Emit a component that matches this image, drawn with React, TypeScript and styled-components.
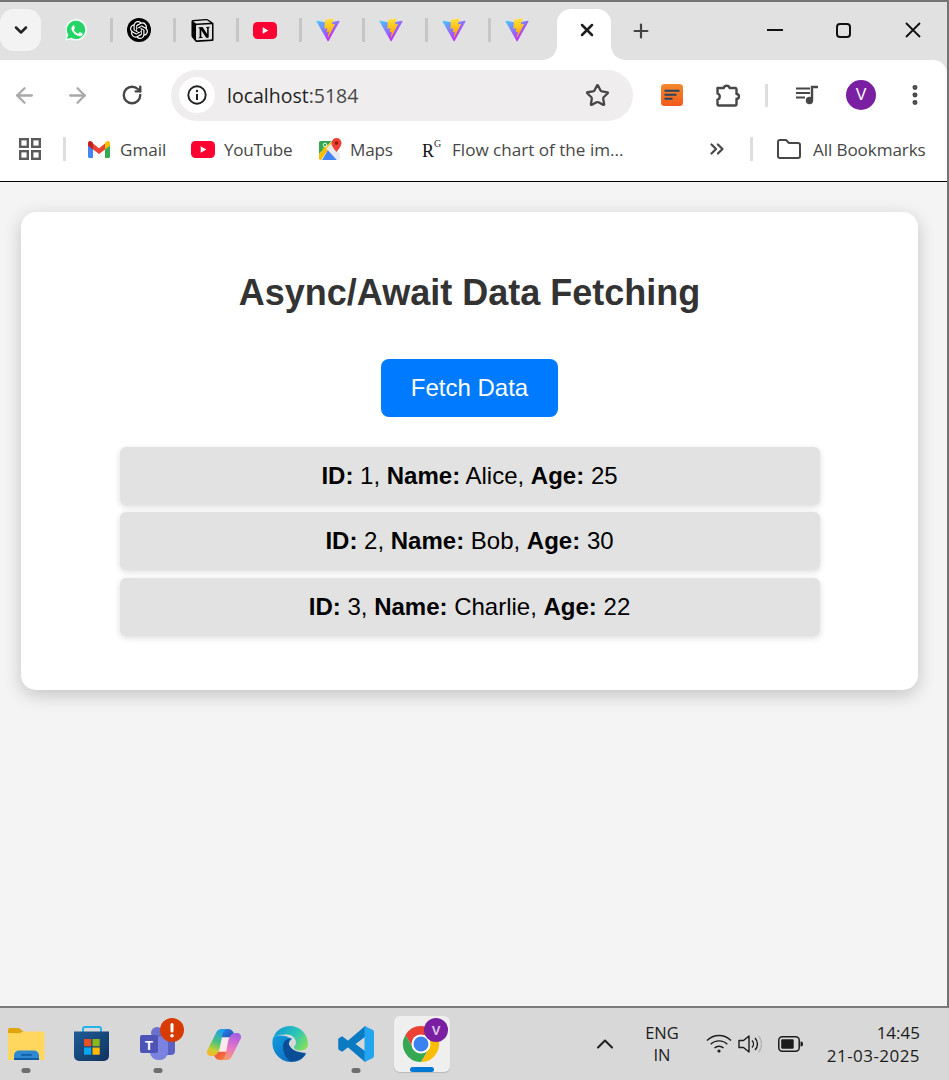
import React from "react";
import styled, { createGlobalStyle } from "styled-components";
import { ArrowLeft, ArrowRight, RotateCw, Star, X, Plus, ChevronDown, ChevronUp, ChevronsRight, EllipsisVertical } from "lucide-react";
import { SiOpenai, SiNotion } from "react-icons/si";

const Global = createGlobalStyle`
  * { box-sizing: border-box; }
  html, body { margin: 0; padding: 0; background: #d8d8d8; }
  body { font-family: "Liberation Sans", Arial, sans-serif; overflow: hidden; }
  svg { flex: none; }
`;

const UI_FONT = `"Open Sans", "Noto Sans", sans-serif`;

const Screen = styled.div`
  width: 949px; height: 1080px; display: flex; flex-direction: column; overflow: hidden;
`;
const BrowserWindow = styled.div`
  height: 1008px; flex: none; display: flex; flex-direction: column;
  border-top: 2px solid #747474; border-right: 2px solid #747474; border-bottom: 2px solid #7a7a7a;
  background: #e1e1e1;
`;
const TabStrip = styled.div`height: 58px; flex: none; display: flex; align-items: flex-start; background: #e1e1e1;`;
const TabMenu = styled.div`
  width: 41px; height: 42px; margin-top: 7px; border-radius: 14px; background: #f3f3f3;
  display: flex; align-items: center; justify-content: center; color: #222;
`;
const TabSlot = styled.div`
  width: 63px; height: 58px; padding-left: 14px; display: flex; align-items: center; justify-content: space-between;
  margin-left: ${p => p.$first ? "9px" : "0"};
`;
const FavIcon = styled.div`width: 24px; height: 24px; margin-top: -2px; display: flex; align-items: center; justify-content: center;`;
const TabDivider = styled.div`width: 3px; height: 24px; margin-top: -2px; background: #c6c6c6;`;
const ActiveTab = styled.div`
  position: relative; width: 54px; height: 51px; margin: 7px 0 0 3px; background: #fff;
  border-radius: 14px 14px 0 0; display: flex; align-items: center; justify-content: center; padding: 0 0 10px 6px; color: #1f1f1f;
  &::before, &::after { content: ""; position: absolute; bottom: 0; width: 14px; height: 14px; }
  &::before { left: -14px; background: radial-gradient(circle at 0 0, transparent 13.5px, #fff 14px); }
  &::after { right: -14px; background: radial-gradient(circle at 100% 0, transparent 13.5px, #fff 14px); }
`;
const NewTab = styled.div`width: 24px; height: 24px; margin: 17px 0 0 18px; color: #444; display: flex; align-items: center; justify-content: center;`;
const WindowControls = styled.div`margin-left: auto; display: flex; height: 58px; align-items: center;`;
const ControlSlot = styled.div`width: 69px; height: 24px; margin-top: -2px; display: flex; align-items: center; justify-content: center; color: #111;`;

const Toolbar = styled.div`
  height: 62px; flex: none; padding-top: 8px; background: #fff; border-top-right-radius: 14px;
  display: flex; align-items: center;
`;
const ToolSlot = styled.div`
  width: ${p => p.$w}px; margin-left: ${p => p.$ml || 0}px; flex: none; display: flex; align-items: center; justify-content: center;
  color: ${p => p.$dim ? "#a9a9a9" : "#474747"};
`;
const Omnibox = styled.div`
  width: 462px; height: 51px; margin-left: 13px; border-radius: 26px; background: #efeded; flex: none;
  display: flex; align-items: center; padding: 0 23px 0 8px;
`;
const SiteInfo = styled.div`
  width: 36px; height: 36px; border-radius: 50%; background: #fff; display: flex; align-items: center; justify-content: center; flex: none;
`;
const UrlText = styled.div`
  margin-left: 12px; font: 400 19.5px ${UI_FONT}; color: #1f1f1f; flex: 1;
  span { color: #474747; }
`;
const ToolDivider = styled.div`width: 3px; height: 23px; background: #dedede; margin-left: 20px; flex: none;`;
const Avatar = styled.div`
  width: 30px; height: 30px; border-radius: 50%; background: #7b1fa2; color: #fff; flex: none;
  font: 400 16px "Liberation Sans", sans-serif; display: flex; align-items: center; justify-content: center;
`;

const Bookmarks = styled.div`
  height: 60px; flex: none; background: #fff; border-bottom: 1px solid #000; padding-bottom: 5px;
  display: flex; align-items: center;
`;
const AppsButton = styled.div`width: 22px; height: 22px; margin-left: 19px; flex: none; display: flex;`;
const BarDivider = styled.div`width: 3px; height: 24px; background: #dedede; flex: none; margin-left: ${p => p.$ml}px;`;
const BookmarkItem = styled.div`
  width: ${p => p.$w}px; margin-left: ${p => p.$ml || 0}px; flex: none; display: flex; align-items: center; gap: ${p => p.$gap || 9}px;
  white-space: nowrap;
`;
const BookmarkLabel = styled.span`font: 400 17.1px ${UI_FONT}; color: #474747; letter-spacing: ${p => p.$ls || 0}px;`;
const RGLogo = styled.span`
  width: 20px; flex: none; font: 400 18px "Liberation Serif", serif; color: #111; display: flex; align-items: flex-start; padding-top: 4px;
  sup { font: 400 10px "Liberation Serif", serif; margin: -3px 0 0 0; color: #333; }
`;

const Page = styled.main`flex: 1; background: #f4f4f4; padding: 30px 29px 0 21px;`;
const Card = styled.section`
  height: 478px; background: #fff; border-radius: 15px; box-shadow: 0 5px 18px rgba(0,0,0,.2);
  display: flex; flex-direction: column; align-items: center; padding-top: 60px;
`;
const Title = styled.h1`margin: 0; font: 700 36px/42px "Liberation Sans", Arial, sans-serif; color: #333;`;
const FetchButton = styled.button`
  margin-top: 45px; width: 177px; height: 58px; border: 0; border-radius: 8px; background: #007bff; color: #fff;
  font: 400 24px "Liberation Sans", Arial, sans-serif; padding: 0;
`;
const UserList = styled.ul`
  list-style: none; margin: 30px 0 0; padding: 0; width: 700px; display: flex; flex-direction: column; gap: 7.4px;
`;
const UserRow = styled.li`
  height: 58px; border-radius: 6px; background: #e2e2e2; box-shadow: 0 2px 6px rgba(0,0,0,.14);
  display: flex; align-items: center; justify-content: center; color: #000;
  font: 400 24px "Liberation Sans", Arial, sans-serif; white-space: pre;
  b { font-weight: 700; }
`;

const Taskbar = styled.footer`
  height: 72px; flex: none; background: #d8d8d8; display: flex; align-items: center; padding: 0 29px 0 8px;
`;
const TaskIcons = styled.div`display: flex; gap: 30px;`;
const TaskItem = styled.div`
  position: relative; width: 36px; height: 72px; display: flex; align-items: center; justify-content: center;
  ${p => p.$active ? `
    &::before { content: ""; position: absolute; left: -10px; right: -10px; top: 8px; bottom: 8px; background: #efefef; border-radius: 6px; box-shadow: 0 1px 1px rgba(0,0,0,.15); }
  ` : ""}
  svg { position: relative; overflow: visible; }
`;
const Running = styled.div`
  position: absolute; bottom: 7px; left: 50%; transform: translateX(-50%); width: 9px; height: 5px; border-radius: 3px; background: #6e6e6e;
`;
const Focused = styled.div`
  position: absolute; bottom: 8px; left: 50%; transform: translateX(-50%); width: 24px; height: 5px; border-radius: 3px; background: #0078d4;
`;
const Tray = styled.div`margin-left: auto; display: flex; align-items: center;`;
const TrayChevron = styled.div`width: 24px; display: flex; justify-content: center; color: #222; margin-right: 22px;`;
const Lang = styled.div`
  width: 46px; text-align: center; font: 400 16.5px/22.5px ${UI_FONT}; color: #1c1c1c; margin-right: 21px;
`;
const TrayIcon = styled.div`
  width: ${p => p.$w}px; margin-right: ${p => p.$mr}px; display: flex; justify-content: center; flex: none;
`;
const Clock = styled.div`
  width: 104px; text-align: right; font: 400 17px/23px ${UI_FONT}; color: #1c1c1c;
`;
const ClockDate = styled.span`letter-spacing: .45px;`;

const ViteIcon = () => (
  <svg width="24" height="24" viewBox="0 0 410 404">
    <defs>
      <linearGradient id="viteA" x1="6" y1="33" x2="235" y2="344" gradientUnits="userSpaceOnUse">
        <stop stopColor="#41D1FF" /><stop offset="1" stopColor="#BD34FE" />
      </linearGradient>
      <linearGradient id="viteB" x1="194" y1="8" x2="236" y2="292" gradientUnits="userSpaceOnUse">
        <stop stopColor="#FFEA83" /><stop offset=".08" stopColor="#FFDD35" /><stop offset="1" stopColor="#FFA800" />
      </linearGradient>
    </defs>
    <path fill="url(#viteA)" d="M399.641 59.5246L215.643 388.545C211.844 395.338 202.084 395.378 198.228 388.618L10.5817 59.5563C6.38087 52.1896 12.6802 43.2665 21.0281 44.7586L205.223 77.6824C206.398 77.8924 207.601 77.8904 208.776 77.6763L389.119 44.8058C397.439 43.2894 403.768 52.1434 399.641 59.5246Z" />
    <path fill="url(#viteB)" d="M292.965 1.5744L156.801 28.2552C154.563 28.6937 152.906 30.5903 152.771 32.8664L144.395 174.33C144.198 177.662 147.258 180.248 150.51 179.498L188.42 170.749C191.967 169.931 195.172 173.055 194.443 176.622L183.18 231.775C182.422 235.487 185.907 238.661 189.532 237.56L212.947 230.446C216.577 229.344 220.065 232.527 219.297 236.242L201.398 322.875C200.278 328.294 207.486 331.249 210.492 326.603L212.5 323.5L323.454 102.072C325.312 98.3645 322.108 94.137 318.036 94.9228L279.014 102.454C275.347 103.161 272.227 99.746 273.262 96.1583L298.731 7.86689C299.767 4.27314 296.636 0.855181 292.965 1.5744Z" />
  </svg>
);
const WhatsApp = () => (
  <svg width="24" height="24" viewBox="0 0 24 24">
    <path fill="#fff" d="M1 23l1.6-5.8A11 11 0 1 1 7 21.5z" stroke="#cfe8d8" strokeWidth=".6" />
    <path fill="#25d366" d="M3 21l1.2-4.3a9.2 9.2 0 1 1 3.2 3.1z" />
    <path fill="#fff" d="M8.8 6.7c-.3 0-.8.1-1.2.6-.5.5-1.2 1.3-1.2 2.9s1.2 3.3 1.4 3.5c.2.2 2.4 3.7 5.8 5 2.8 1.1 3.4.9 4 .8.6-.1 2-.8 2.3-1.6.3-.8.3-1.5.2-1.6-.1-.1-.3-.2-.7-.4l-2.4-1.2c-.3-.1-.6-.2-.8.2l-1.1 1.4c-.2.2-.4.3-.8.1-.4-.2-1.5-.6-2.9-1.8-1.1-1-1.8-2.2-2-2.6-.2-.4 0-.6.2-.8l.6-.7c.2-.2.2-.4.4-.6.1-.2.1-.5 0-.7l-1.1-2.6c-.3-.7-.6-.6-.8-.6z" transform="translate(2.2 2.2) scale(.82)" />
  </svg>
);
const OpenAiBadge = styled.div`
  width: 24px; height: 24px; border-radius: 50%; background: #000; color: #fff; display: flex; align-items: center; justify-content: center;
`;
const YouTube = ({ w = 24, h = 17 }: { w?: number; h?: number }) => (
  <svg width={w} height={h} viewBox="0 0 24 17">
    <rect width="24" height="17" rx="4.5" fill="#ff0033" />
    <path d="M9.7 5.2v6.6l5.6-3.3z" fill="#fff" />
  </svg>
);
const Gmail = () => (
  <svg width="22" height="17" viewBox="0 0 22 17">
    <path fill="#4285f4" d="M0 2v13.5c0 .8.7 1.5 1.5 1.5H5V8z" />
    <path fill="#34a853" d="M22 2v13.5c0 .8-.7 1.5-1.5 1.5H17V8z" />
    <path fill="#ea4335" d="M5 8.5V2.6l6 4.6 6-4.6v5.9l-6 4.5z" />
    <path fill="#c5221f" d="M0 2.2C0 .4 2-.5 3.4.6L5 1.8v6.7L0 4.7z" />
    <path fill="#fbbc04" d="M22 2.2c0-1.8-2-2.7-3.4-1.6L17 1.8v6.7l5-3.8z" />
  </svg>
);
const Maps = () => (
  <svg width="23" height="23" viewBox="0 0 23 23">
    <path fill="#34a853" d="M0 4.5C0 3.6.7 3 1.5 3H13L0 16z" />
    <path fill="#fbbc04" d="M0 16 6.5 9.5 9 12 2 22H1.5C.7 22 0 21.3 0 20.5z" />
    <path fill="#4285f4" d="M9 12l9 10H3z" />
    <path fill="#e8eaed" d="M13 3 6.500 9.500 18 22h-.5 2c.8 0 1.500-.7 1.500-1.500V16L15 8z" />
    <path fill="#fbbc04" d="M4 10l10-7h1L3.500 14z" opacity=".9" />
    <path fill="#ea4335" d="M17.500 0a5 5 0 0 0-5 5c0 3.500 5 9 5 9s5-5.500 5-9a5 5 0 0 0-5-5z" />
    <circle cx="17.500" cy="5" r="1.800" fill="#a50e0e" />
    <circle cx="6" cy="7" r="1.800" fill="none" stroke="#fff" strokeWidth=".9" />
  </svg>
);
const Extension = () => (
  <svg width="22" height="22" viewBox="0 0 22 22">
    <defs>
      <linearGradient id="ext" x1="0" y1="0" x2="0" y2="1">
        <stop stopColor="#f48a2c" /><stop offset="1" stopColor="#f4581c" />
      </linearGradient>
    </defs>
    <rect width="22" height="22" rx="3.500" fill="url(#ext)" />
    <path d="M3.500 6.800h15M3.500 10.800h12M3.500 14.800h8" stroke="#27445f" strokeWidth="2" />
  </svg>
);
const PuzzleIcon = () => (
  <svg width="26" height="26" viewBox="0 0 26 26" fill="none" stroke="#474747" strokeWidth="2.400" strokeLinejoin="round">
    <path d="M2.500 6h6.300a3 3 0 0 1 5.800 0H20.500a1.500 1.500 0 0 1 1 1v5a2.400 2.400 0 0 1 0 4.800V22a1.500 1.500 0 0 1-1.500 1.500H4a1.500 1.500 0 0 1-1.500-1.500v-4.400c2.900-.3 3-5.700 0-6z" />
  </svg>
);
const MediaIcon = () => (
  <svg width="24" height="20" viewBox="0 0 24 20" fill="none">
    <path d="M1 3.500h14M1 8h14M1 12.500h9" stroke="#474747" strokeWidth="2.200" />
    <path d="M17 14.500V2h6" stroke="#474747" strokeWidth="2.400" />
    <circle cx="14.500" cy="15.500" r="3.700" fill="#474747" />
  </svg>
);
const InfoIcon = () => (
  <svg width="20" height="20" viewBox="0 0 20 20" fill="none">
    <circle cx="10" cy="10" r="8.700" stroke="#1f1f1f" strokeWidth="1.900" />
    <circle cx="10" cy="6" r="1.200" fill="#1f1f1f" />
    <path d="M10 9v6" stroke="#1f1f1f" strokeWidth="2" />
  </svg>
);
const AppsIcon = () => (
  <svg width="22" height="22" viewBox="0 0 22 22" fill="none" stroke="#5b5b5b" strokeWidth="2.400">
    <rect x="1.200" y="1.200" width="7.600" height="7.600" />
    <rect x="13.200" y="1.200" width="7.600" height="7.600" />
    <rect x="1.200" y="13.200" width="7.600" height="7.600" />
    <rect x="13.200" y="13.200" width="7.600" height="7.600" />
  </svg>
);
const FolderIcon = () => (
  <svg width="24" height="20" viewBox="0 0 24 20" fill="none" stroke="#474747" strokeWidth="2">
    <path d="M1 3a2 2 0 0 1 2-2h6l3 3h9a2 2 0 0 1 2 2v11a2 2 0 0 1-2 2H3a2 2 0 0 1-2-2z" strokeLinejoin="round" />
  </svg>
);
const MinimizeIcon = () => <svg width="16" height="2" viewBox="0 0 16 2"><rect width="16" height="2" fill="#111" /></svg>;
const MaximizeIcon = () => (
  <svg width="15" height="15" viewBox="0 0 15 15" fill="none"><rect x="1" y="1" width="13" height="13" rx="3" stroke="#111" strokeWidth="2" /></svg>
);
const CloseIcon = () => (
  <svg width="16" height="16" viewBox="0 0 16 16" stroke="#111" strokeWidth="1.800"><path d="M1 1l14 14M15 1L1 15" /></svg>
);

const FolderApp = () => (
  <svg width="37" height="34" viewBox="0 0 37 34">
    <path fill="#e0a50d" d="M0 3a2 2 0 0 1 2-2h9l5 4h20v26H0z" />
    <path fill="#ffd75e" d="M0 6l11.500.3L15 4.500h19.500a2 2 0 0 1 2 2V33H0z" />
    <path fill="#2f88d0" d="M6 33v-4.500a5 5 0 0 1 5-5h15a5 5 0 0 1 5 5V33z" />
    <path fill="#0f5ca8" d="M6 33v-2h25v2z" />
    <rect x="13" y="27" width="11" height="1.800" rx=".9" fill="#0f5ca8" />
  </svg>
);
const StoreApp = () => (
  <svg width="36" height="36" viewBox="0 0 36 36">
    <path d="M9 7V3a2 2 0 0 1 2-2h14a2 2 0 0 1 2 2v4" fill="none" stroke="#24b3ea" strokeWidth="2" />
    <defs><linearGradient id="store" x1="0" y1="0" x2="1" y2="1"><stop stopColor="#1e5c97" /><stop offset="1" stopColor="#10335e" /></linearGradient></defs>
    <path d="M0 5.500h35V30a5 5 0 0 1-5 5H5a5 5 0 0 1-5-5z" fill="url(#store)" />
    <rect x="10" y="13" width="7.200" height="7.200" fill="#e8511f" />
    <rect x="18.500" y="13" width="7.200" height="7.200" fill="#8ab81a" />
    <rect x="10" y="21.500" width="7.200" height="7.200" fill="#08a6ef" />
    <rect x="18.500" y="21.500" width="7.200" height="7.200" fill="#ffb900" />
  </svg>
);
const TeamsApp = () => (
  <svg width="44" height="44" viewBox="0 0 44 44">
    <circle cx="21" cy="11" r="6" fill="#6a70cc" />
    <rect x="24" y="15" width="15" height="18" rx="4" fill="#5a61c2" />
    <path fill="#7b83e0" d="M14 15h18v15a8 8 0 0 1-9 8 8 8 0 0 1-9-8z" />
    <rect x="4" y="13" width="18" height="18" rx="2" fill="#4e54b5" />
    <text x="13" y="27.500" textAnchor="middle" fontFamily="Liberation Sans, sans-serif" fontWeight="700" fontSize="13" fill="#fff">T</text>
    <circle cx="36" cy="8" r="12" fill="#d83b01" />
    <rect x="34.500" y="1" width="3" height="9.500" rx="1.500" fill="#fff" />
    <circle cx="36" cy="13.800" r="1.800" fill="#fff" />
  </svg>
);
const CopilotApp = () => (
  <svg width="34" height="31" viewBox="0 0 34 31">
    <defs>
      <linearGradient id="copA" x1="0.6" y1="0" x2="0.3" y2="1"><stop stopColor="#1c9ff0" /><stop offset=".5" stopColor="#4fc47a" /><stop offset=".8" stopColor="#c9cf2f" /><stop offset="1" stopColor="#f7b52c" /></linearGradient>
      <linearGradient id="copB" x1="0.6" y1="0" x2="0.3" y2="1"><stop stopColor="#f59a6a" /><stop offset=".45" stopColor="#e775c6" /><stop offset="1" stopColor="#a35de6" /></linearGradient>
      <linearGradient id="copC" x1="0" y1="0" x2="1" y2="1"><stop stopColor="#2f8be6" /><stop offset="1" stopColor="#1a3fae" /></linearGradient>
      <linearGradient id="copD" x1="0" y1="0" x2="1" y2="1"><stop stopColor="#f78a3c" /><stop offset="1" stopColor="#e8383a" /></linearGradient>
    </defs>
    <path fill="url(#copC)" d="M14 0h7c3 0 5 1.500 6 5l2.500 7c-2-2.500-4.500-3.500-7.500-3.500H12z" />
    <path fill="url(#copD)" d="M14 0h7c3 0 5 1.500 6 5l2.500 7c-2-2.500-4.500-3.500-7.500-3.500H12z" transform="rotate(180 17 15.500)" />
    <path fill="#fbe9ee" d="M14 8.500h9l-3 14h-9z" />
    <path fill="url(#copA)" d="M9 4c1-2.500 3-4 6-4h6c-3 0-4.500 2-5.500 5L13 18c-1 5-3.500 9-7.500 9H4C1 27-.7 24.500.2 21.500z" />
    <path fill="url(#copB)" d="M9 4c1-2.500 3-4 6-4h6c-3 0-4.500 2-5.500 5L13 18c-1 5-3.500 9-7.500 9H4C1 27-.7 24.500.2 21.500z" transform="rotate(180 17 15.500)" />
  </svg>
);
const EdgeApp = () => (
  <svg width="36" height="36" viewBox="0 0 36 36">
    <defs>
      <linearGradient id="edgeA" x1="0" y1="0.2" x2="1" y2="0.7"><stop stopColor="#0e9ad8" /><stop offset=".6" stopColor="#2fc7b3" /><stop offset="1" stopColor="#7fdf5e" /></linearGradient>
      <linearGradient id="edgeB" x1="0" y1="0" x2="1" y2="1"><stop stopColor="#0f9ce0" /><stop offset="1" stopColor="#0c62b8" /></linearGradient>
    </defs>
    <path fill="url(#edgeB)" d="M1 12C-2 24 7 36 19 36c7 0 12-3 15-8-5 2-13 1-16-4-3-5 0-10 2-11C12 8 4 9 1 12z" />
    <path fill="url(#edgeA)" d="M1 13C3 5 10 0 18 0c10 0 18 8 18 18 0 4-3 6.500-8 6.500-3 0-6-1-6-3 0-2 2-2 2-5 0-4-4-8-9-8S4 9 1 13z" />
    <path fill="#0a4f96" d="M11 20c0-5 4-8 9-7.500-3 1-4 4-2.500 7 2.500 5 9 7 16.500 7.500-3 5-8 8.500-15 8.500-5-2-8-9-8-15.500z" />
  </svg>
);
const VsCodeApp = () => (
  <svg width="36" height="36" viewBox="0 0 36 36">
    <path fill="#0a7bc2" stroke="#0a7bc2" strokeWidth="1.500" strokeLinejoin="round" d="M27 1 10 15.500 4 11 1 13v10l3 2 6-4.500L27 35v-9L16.500 18 27 10z" />
    <path fill="#23a6ef" d="M26.500 0 34.500 3.800A2.500 2.500 0 0 1 36 6v24a2.500 2.500 0 0 1-1.500 2.200L26.500 36z" />
  </svg>
);
const ChromeApp = () => (
  <svg width="36" height="36" viewBox="0 0 36 36">
    <g transform="translate(-1 0)">
      <path fill="#ea4335" d="M2.400 9A18 18 0 0 1 33.600 9H18A9 9 0 0 0 10.200 22.500Z" />
      <path fill="#fbbc04" d="M2.400 9A18 18 0 0 1 33.600 9H18A9 9 0 0 0 10.200 22.500Z" transform="rotate(120 18 18)" />
      <path fill="#34a853" d="M2.400 9A18 18 0 0 1 33.600 9H18A9 9 0 0 0 10.200 22.500Z" transform="rotate(240 18 18)" />
      <circle cx="18" cy="18" r="9.500" fill="#fff" />
      <circle cx="18" cy="18" r="7.500" fill="#3b82f0" />
    </g>
    <circle cx="32" cy="4" r="12" fill="#7b1fa2" />
    <text x="32" y="9" textAnchor="middle" fontFamily="Liberation Sans, sans-serif" fontSize="13" fontWeight="700" fill="#d9c6e4">V</text>
  </svg>
);
const WifiIcon = () => (
  <svg width="26" height="20" viewBox="0 0 26 20" fill="none" stroke="#1c1c1c" strokeWidth="1.400">
    <path d="M1 6.500a17 17 0 0 1 24 0M4.700 10.200a12 12 0 0 1 16.600 0M8.500 14a6.500 6.500 0 0 1 9 0" />
    <circle cx="13" cy="17" r="1.600" fill="#1c1c1c" stroke="none" />
  </svg>
);
const SpeakerIcon = () => (
  <svg width="24" height="20" viewBox="0 0 24 20" fill="none" stroke="#1c1c1c" strokeWidth="1.400" strokeLinejoin="round">
    <path d="M1 6.500h4.500L11 2v16l-5.500-4.500H1z" />
    <path d="M14 6.500a5 5 0 0 1 0 7M17 4a8.500 8.500 0 0 1 0 12" />
    <path d="M20.500 2a12 12 0 0 1 0 16" stroke="#b4b4b4" />
  </svg>
);
const BatteryIcon = () => (
  <svg width="25" height="16" viewBox="0 0 25 16">
    <rect x=".8" y=".8" width="20.400" height="14.400" rx="3.500" fill="none" stroke="#1c1c1c" strokeWidth="1.500" />
    <rect x="3.200" y="3.200" width="12.500" height="9.600" rx="1.200" fill="#1c1c1c" />
    <path d="M22.500 5.500h.5a2 2 0 0 1 2 2v1a2 2 0 0 1-2 2h-.5z" fill="#1c1c1c" />
  </svg>
);

const users = [
  { id: 1, name: "Alice", age: 25 },
  { id: 2, name: "Bob", age: 30 },
  { id: 3, name: "Charlie", age: 22 },
];

export default function App() {
  return (
    <Screen>
      <Global />
      <BrowserWindow>
        <TabStrip>
          <TabMenu><ChevronDown size={20} strokeWidth={3} /></TabMenu>
          <TabSlot $first><FavIcon><WhatsApp /></FavIcon><TabDivider /></TabSlot>
          <TabSlot><FavIcon><OpenAiBadge><SiOpenai size={18} /></OpenAiBadge></FavIcon><TabDivider /></TabSlot>
          <TabSlot><FavIcon><SiNotion size={23} color="#000" /></FavIcon><TabDivider /></TabSlot>
          <TabSlot><FavIcon><YouTube /></FavIcon><TabDivider /></TabSlot>
          <TabSlot><FavIcon><ViteIcon /></FavIcon><TabDivider /></TabSlot>
          <TabSlot><FavIcon><ViteIcon /></FavIcon><TabDivider /></TabSlot>
          <TabSlot><FavIcon><ViteIcon /></FavIcon><TabDivider /></TabSlot>
          <TabSlot><FavIcon><ViteIcon /></FavIcon></TabSlot>
          <ActiveTab><X size={20} strokeWidth={3} /></ActiveTab>
          <NewTab><Plus size={22} strokeWidth={2.4} /></NewTab>
          <WindowControls>
            <ControlSlot><MinimizeIcon /></ControlSlot>
            <ControlSlot><MaximizeIcon /></ControlSlot>
            <ControlSlot><CloseIcon /></ControlSlot>
          </WindowControls>
        </TabStrip>

        <Toolbar>
          <ToolSlot $w={48} $dim><ArrowLeft size={25} strokeWidth={2.2} /></ToolSlot>
          <ToolSlot $w={58} $dim><ArrowRight size={25} strokeWidth={2.2} /></ToolSlot>
          <ToolSlot $w={52}><RotateCw size={22} strokeWidth={2.6} /></ToolSlot>
          <Omnibox>
            <SiteInfo><InfoIcon /></SiteInfo>
            <UrlText>localhost<span>:5184</span></UrlText>
            <Star size={25} strokeWidth={2.2} color="#474747" />
          </Omnibox>
          <ToolSlot $w={78}><Extension /></ToolSlot>
          <ToolSlot $w={34}><PuzzleIcon /></ToolSlot>
          <ToolDivider />
          <ToolSlot $w={78}><MediaIcon /></ToolSlot>
          <Avatar>V</Avatar>
          <ToolSlot $w={26} $ml={26}><EllipsisVertical size={26} strokeWidth={2.6} /></ToolSlot>
        </Toolbar>

        <Bookmarks>
          <AppsButton><AppsIcon /></AppsButton>
          <BarDivider $ml={22} />
          <BookmarkItem $ml={22} $w={103} $gap={10}><Gmail /><BookmarkLabel>Gmail</BookmarkLabel></BookmarkItem>
          <BookmarkItem $w={128}><YouTube /><BookmarkLabel $ls={-0.3}>YouTube</BookmarkLabel></BookmarkItem>
          <BookmarkItem $w={103} $gap={8}><Maps /><BookmarkLabel $ls={-0.2}>Maps</BookmarkLabel></BookmarkItem>
          <BookmarkItem $w={283} $gap={10}><RGLogo>R<sup>G</sup></RGLogo><BookmarkLabel>Flow chart of the im...</BookmarkLabel></BookmarkItem>
          <ToolSlot $w={24}><ChevronsRight size={22} strokeWidth={2.4} /></ToolSlot>
          <BarDivider $ml={21} />
          <BookmarkItem $ml={24} $w={150} $gap={12}><FolderIcon /><BookmarkLabel $ls={-0.1}>All Bookmarks</BookmarkLabel></BookmarkItem>
        </Bookmarks>

        <Page>
          <Card>
            <Title>Async/Await Data Fetching</Title>
            <FetchButton>Fetch Data</FetchButton>
            <UserList>
              {users.map(u => (
                <UserRow key={u.id}>
                  <span><b>ID:</b> {u.id}, <b>Name:</b> {u.name}, <b>Age:</b> {u.age}</span>
                </UserRow>
              ))}
            </UserList>
          </Card>
        </Page>
      </BrowserWindow>

      <Taskbar>
        <TaskIcons>
          <TaskItem><FolderApp /><Running /></TaskItem>
          <TaskItem><StoreApp /></TaskItem>
          <TaskItem><TeamsApp /><Running /></TaskItem>
          <TaskItem><CopilotApp /></TaskItem>
          <TaskItem><EdgeApp /></TaskItem>
          <TaskItem><VsCodeApp /><Running /></TaskItem>
          <TaskItem $active><ChromeApp /><Focused /></TaskItem>
        </TaskIcons>
        <Tray>
          <TrayChevron><ChevronUp size={28} strokeWidth={1.8} /></TrayChevron>
          <Lang>ENG<br />IN</Lang>
          <TrayIcon $w={26} $mr={6}><WifiIcon /></TrayIcon>
          <TrayIcon $w={24} $mr={16}><SpeakerIcon /></TrayIcon>
          <TrayIcon $w={25} $mr={13}><BatteryIcon /></TrayIcon>
          <Clock>14:45<br /><ClockDate>21-03-2025</ClockDate></Clock>
        </Tray>
      </Taskbar>
    </Screen>
  );
}
